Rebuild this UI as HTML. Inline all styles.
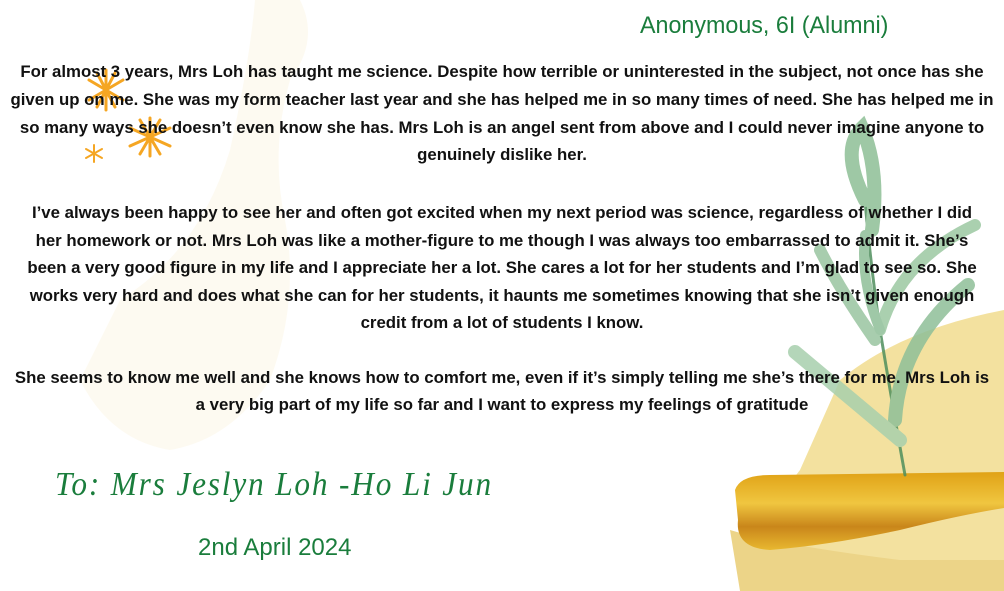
<!DOCTYPE html>
<html><head><meta charset="utf-8"><style>
html,body{margin:0;padding:0}
body{width:1004px;height:591px;position:relative;overflow:hidden;background:#fff;font-family:"Liberation Sans",sans-serif}
.t{position:absolute;left:0;width:1004px;text-align:center;font-weight:bold;font-size:16.8px;color:#111;white-space:nowrap;line-height:27.5px}
.g{position:absolute;color:#1a7d3c;white-space:nowrap}
</style></head><body>
<svg width="1004" height="591" style="position:absolute;left:0;top:0">
<defs>
<linearGradient id="gold" x1="0" y1="0" x2="0" y2="1"><stop offset="0" stop-color="#e0a216"/><stop offset="0.4" stop-color="#f0c640"/><stop offset="0.7" stop-color="#c9861a"/><stop offset="1" stop-color="#e8b830"/></linearGradient>
</defs>
<path d="M255 0 L300 0 Q320 40 290 80 Q270 150 285 220 Q300 300 270 380 Q230 440 170 450 Q110 440 80 380 L120 300 Q200 250 230 150 Q250 60 255 0Z" fill="#fdf9ee" opacity="0.8"/>
<path d="M840 380 Q900 330 1004 310 L1004 591 L770 591 Q760 520 800 470 Z" fill="#f1dc8e" opacity="0.85"/>
<path d="M730 530 Q780 545 900 560 L1004 560 L1004 591 L740 591 Z" fill="#ecd488"/>
<path d="M735 490 Q740 475 770 475 L1004 472 L1004 508 Q960 515 900 530 Q830 545 770 550 Q735 548 738 520 Z" fill="url(#gold)"/>
<g fill="none" stroke="#7fae88" stroke-linecap="round" opacity="0.85">
<path d="M905 475 Q895 420 880 330 Q870 260 865 200" stroke="#4f8f5d" stroke-width="3"/>
<path d="M865 200 Q840 150 862 128 Q880 170 872 230" stroke-width="14" stroke="#8ebf96"/>
<path d="M880 330 Q900 260 975 225" stroke-width="12" stroke="#9cc8a2"/>
<path d="M895 420 Q900 340 968 285" stroke-width="14" stroke="#8fbf98"/>
<path d="M900 440 Q840 390 795 352" stroke-width="14" stroke="#a8d0ad"/>
<path d="M875 340 Q840 290 820 250" stroke-width="12" stroke="#9ac5a0"/>
<path d="M880 330 Q860 280 865 235" stroke-width="10" stroke="#8fbf98"/>
</g>
<g stroke="#f5a623" stroke-width="3" stroke-linecap="round">
<path d="M106 70 L106 110 M89 80 L123 100 M89 100 L123 80 M97 73 L115 107 M115 73 L97 107"/>
<path d="M150 118 L150 156 M130 128 L170 146 M130 146 L170 128 M140 120 L160 154 M160 120 L140 154"/>
<path d="M94 145 L94 162 M86 149 L102 158 M86 158 L102 149" stroke-width="2"/>
</g>
</svg>
<div class="g" style="left:640px;top:12px;font-size:24px;transform:scaleX(0.97);transform-origin:left">Anonymous, 6I (Alumni)</div>
<div class="t" style="top:58px">For almost 3 years, Mrs Loh has taught me science. Despite how terrible or uninterested in the subject, not once has she</div>
<div class="t" style="top:86px">given up on me. She was my form teacher last year and she has helped me in so many times of need. She has helped me in</div>
<div class="t" style="top:114px">so many ways she doesn’t even know she has. Mrs Loh is an angel sent from above and I could never imagine anyone to</div>
<div class="t" style="top:141px">genuinely dislike her.</div>
<div class="t" style="top:199px">I’ve always been happy to see her and often got excited when my next period was science, regardless of whether I did</div>
<div class="t" style="top:227px">her homework or not. Mrs Loh was like a mother-figure to me though I was always too embarrassed to admit it. She’s</div>
<div class="t" style="top:254px">been a very good figure in my life and I appreciate her a lot. She cares a lot for her students and I’m glad to see so. She</div>
<div class="t" style="top:282px">works very hard and does what she can for her students, it haunts me sometimes knowing that she isn’t given enough</div>
<div class="t" style="top:309px">credit from a lot of students I know.</div>
<div class="t" style="top:364px">She seems to know me well and she knows how to comfort me, even if it’s simply telling me she’s there for me. Mrs Loh is</div>
<div class="t" style="top:391px">a very big part of my life so far and I want to express my feelings of gratitude</div>
<div class="g" style="left:55px;top:466px;font-size:34px;font-family:'Liberation Serif',serif;font-style:italic;letter-spacing:2px;transform:scaleX(0.92);transform-origin:left">To: Mrs Jeslyn Loh -Ho Li Jun</div>
<div class="g" style="left:198px;top:534px;font-size:24px">2nd April 2024</div>
</body></html>
